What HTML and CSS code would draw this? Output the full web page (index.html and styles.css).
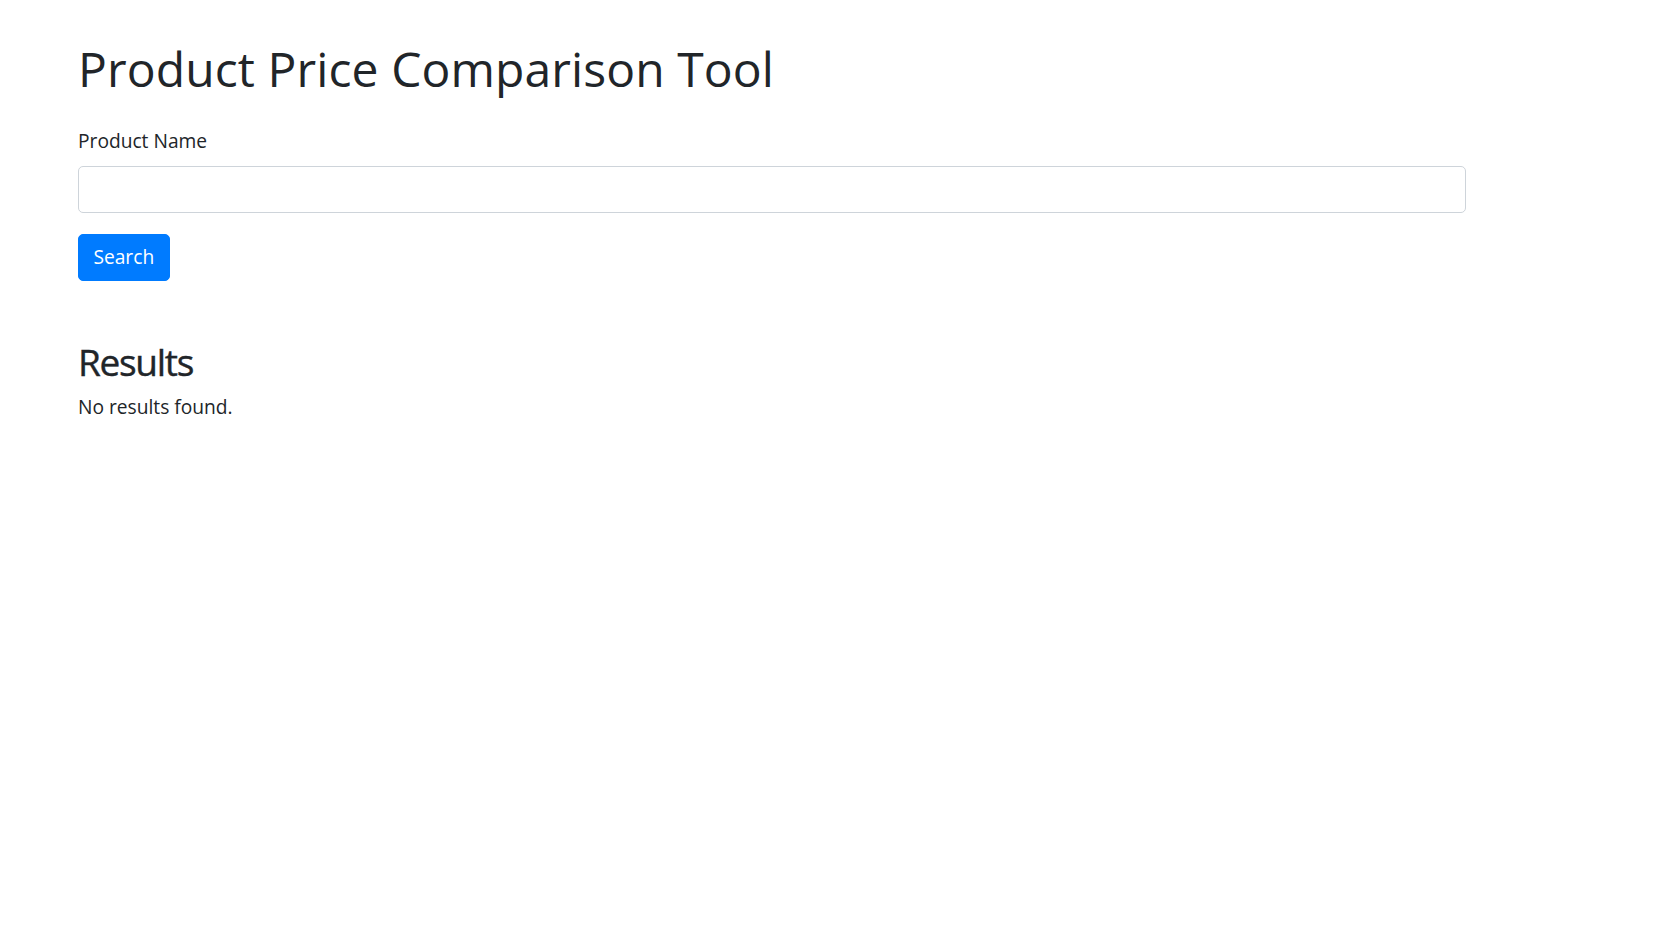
FILE: index.html
```html
<!DOCTYPE html>
<html lang="en">
<head>
<meta charset="utf-8">
<title>Product Price Comparison Tool</title>
<link rel="stylesheet" href="styles.css">
</head>
<body>
<main class="container">
  <h1 class="title">Product Price Comparison Tool</h1>
  <form class="search-form" onsubmit="return false;">
    <div class="form-group">
      <label class="form-label" for="product">Product Name</label>
      <input class="form-input" type="text" id="product">
    </div>
    <button class="btn-primary" type="submit">Search</button>
  </form>
  <section class="results">
    <h2 class="results-title">Results</h2>
    <p class="results-empty">No results found.</p>
  </section>
</main>
</body>
</html>
```

FILE: styles.css
```css
* { box-sizing: border-box; }
html, body { margin: 0; padding: 0; background: #fff; }
body {
  font-family: "Open Sans", "Noto Sans", sans-serif;
  color: #212529;
  font-size: 19.2px;
  line-height: 1.5;
}
.container {
  padding: 40px 211px 0 78px;
}
.title {
  font-size: 48px;
  font-weight: 400;
  line-height: 57.6px;
  margin: 0 0 29px;
  letter-spacing: 0.1px;
}
.form-group { margin-bottom: 21px; }
.form-label {
  display: block;
  margin-bottom: 11px;
  line-height: 28.8px;
}
.form-input {
  display: block;
  width: 100%;
  height: 47px;
  padding: 7px 14px;
  font: inherit;
  color: #495057;
  border: 1px solid #ced4da;
  border-radius: 5px;
  background: #fff;
}
.btn-primary {
  display: inline-block;
  height: 47px;
  padding: 0 14.4px;
  font: inherit;
  color: #fff;
  background: #007bff;
  border: 1px solid #007bff;
  border-radius: 5px;
  cursor: pointer;
}
.results { margin-top: 58px; }
.results-title {
  font-size: 37px;
  font-weight: 500;
  line-height: 46px;
  letter-spacing: -1.3px;
  margin: 0 0 8px;
  -webkit-text-stroke: 0.4px #212529;
}
.results-empty { margin: 0; line-height: 28.8px; }
```
